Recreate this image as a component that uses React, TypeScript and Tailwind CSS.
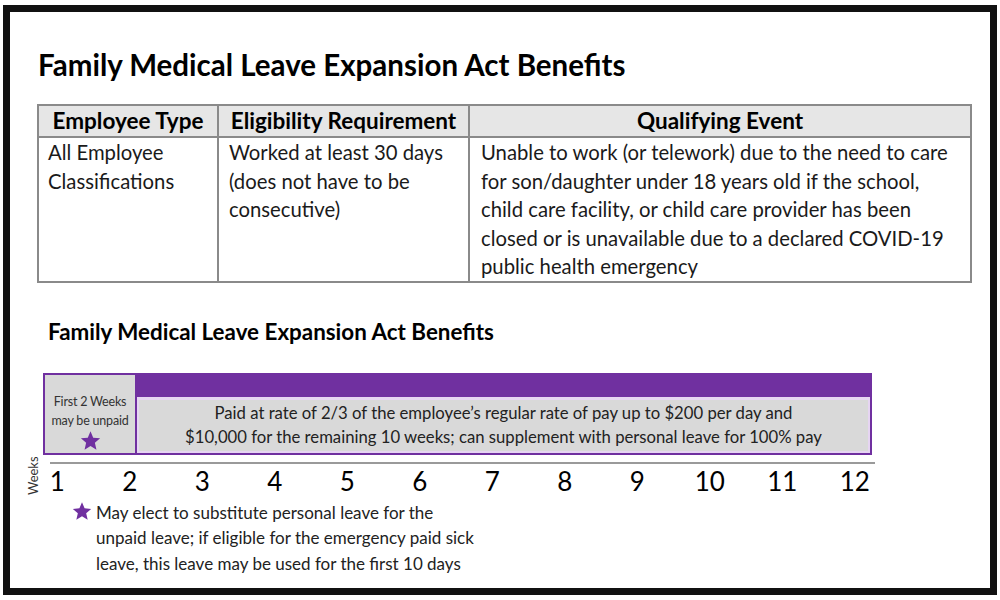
import React from "react"

const weeks = [1, 2, 3, 4, 5, 6, 7, 8, 9, 10, 11, 12]

const Star = ({ className }: { className?: string }) => (
  <svg viewBox="0 0 24 24" className={className} fill="currentColor">
    <path d="M12 1.5l3.09 7.26 7.91.7-6 5.24 1.8 7.8L12 18.4l-6.8 4.1 1.8-7.8-6-5.24 7.91-.7z" />
  </svg>
)

export default function App() {
  return (
    <div className="w-[1000px] h-[600px] bg-white pt-[5px] pl-[3px] font-['Lato',sans-serif] text-[#1a1a1a]">
      <div className="w-[994px] h-[590px] border-[7px] border-[#111] flex flex-col">
        {/* Title */}
        <h1 className="ml-[28px] mt-[35px] text-[29.5px] leading-[36px] font-bold text-black">
          Family Medical Leave Expansion Act Benefits
        </h1>

        {/* Table */}
        <table className="ml-[27px] mt-[21px] w-[935px] border-collapse border-2 border-[#8a8a8a] table-fixed">
          <thead>
            <tr className="bg-[#e6e6e6] text-[22.5px] leading-[28px] font-bold text-black">
              <th className="w-[180px] h-[32px] border-2 border-[#8a8a8a] font-bold">Employee Type</th>
              <th className="w-[251px] border-2 border-[#8a8a8a] font-bold">Eligibility Requirement</th>
              <th className="border-2 border-[#8a8a8a] font-bold">Qualifying Event</th>
            </tr>
          </thead>
          <tbody>
            <tr className="text-[20.3px] leading-[28.6px] align-top">
              <td className="border-2 border-[#8a8a8a] pl-[9px] pb-[2px]">
                All Employee
                <br />
                Classifications
              </td>
              <td className="border-2 border-[#8a8a8a] pl-[10px]">
                Worked at least 30 days
                <br />
                (does not have to be
                <br />
                consecutive)
              </td>
              <td className="border-2 border-[#8a8a8a] pl-[11px]">
                Unable to work (or telework) due to the need to care
                <br />
                for son/daughter under 18 years old if the school,
                <br />
                child care facility, or child care provider has been
                <br />
                closed or is unavailable due to a declared COVID-19
                <br />
                public health emergency
              </td>
            </tr>
          </tbody>
        </table>

        {/* Timeline title */}
        <h2 className="ml-[38px] mt-[36px] text-[22.4px] leading-[26px] font-bold text-black">
          Family Medical Leave Expansion Act Benefits
        </h2>

        {/* Timeline bar */}
        <div className="ml-[33px] mt-[28px] w-[829px] h-[82px] flex border-2 border-[#7030a0]">
          <div className="w-[92px] bg-[#d9d9d9] border-r-2 border-[#7030a0] flex flex-col items-center pt-[17px] text-[12.5px] leading-[19px] tracking-[-0.2px] text-[#333]">
            <span>First 2 Weeks</span>
            <span>may be unpaid</span>
            <Star className="w-[21px] h-[21px] text-[#7030a0]" />
          </div>
          <div className="flex-1 flex flex-col">
            <div className="h-[22px] bg-[#7030a0]" />
            <div className="flex-1 bg-[#d9d9d9] border-2 border-t-[3px] border-[#e6d5f2] flex flex-col items-center justify-center text-[16.7px] leading-[24px] text-[#222]">
              <span>Paid at rate of 2/3 of the employee’s regular rate of pay up to $200 per day and</span>
              <span>$10,000 for the remaining 10 weeks; can supplement with personal leave for 100% pay</span>
            </div>
          </div>
        </div>

        {/* Axis */}
        <div className="ml-[40px] mt-[7px] w-[825px] h-[2px] bg-[#9a9a9a]" />
        <div className="flex items-start">
          <div className="w-[28px] flex justify-end">
            <span className="block -rotate-90 translate-y-[2px] translate-x-[15px] text-[13px] text-[#333]">Weeks</span>
          </div>
          <div className="grid grid-cols-12 w-[870px] -ml-[17px] text-[26px] leading-[34px] text-black">
            {weeks.map((w) => (
              <span key={w} className="text-center">
                {w}
              </span>
            ))}
          </div>
        </div>

        {/* Footnote */}
        <div className="ml-[62px] mt-[2px] flex items-start text-[17px] leading-[25.5px] text-[#222]">
          <Star className="w-[20px] h-[20px] text-[#7030a0] mt-[1px] mr-[4px] shrink-0" />
          <p>
            May elect to substitute personal leave for the
            <br />
            unpaid leave; if eligible for the emergency paid sick
            <br />
            leave, this leave may be used for the first 10 days
          </p>
        </div>
      </div>
    </div>
  )
}
